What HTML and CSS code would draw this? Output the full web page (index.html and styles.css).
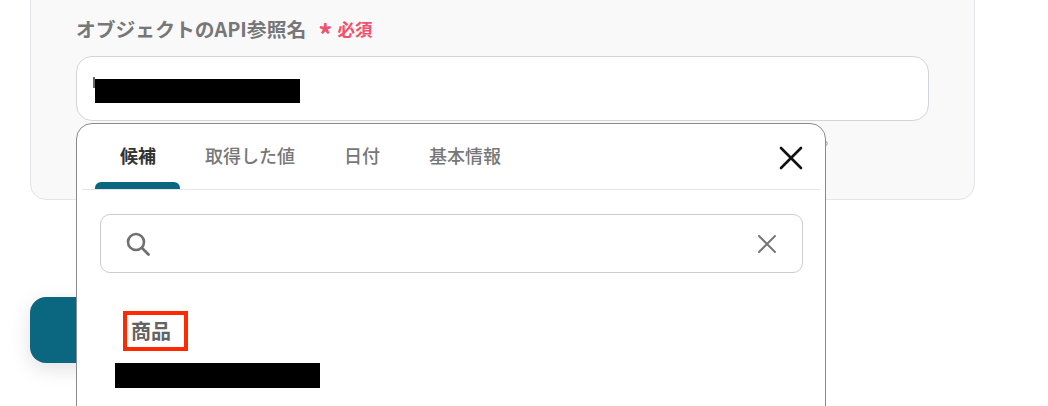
FILE: index.html
```html
<!DOCTYPE html>
<html lang="ja">
<head>
<meta charset="utf-8">
<link rel="stylesheet" href="styles.css">
</head>
<body>
<div class="page">
  <section class="card">
    <div class="label">オブジェクトのAPI参照名<span class="req"><span class="ast">*</span>必須</span></div>
    <div class="input"><span class="caret"></span><span class="redact redact-input"></span></div>
    <div class="help">オブジェクトのAPI参照名を入力してください。</div>
  </section>
  <button class="primary" type="button" aria-label="テスト"></button>

  <div class="dropdown">
    <div class="tabs">
      <div class="tab active">候補</div>
      <div class="tab">取得した値</div>
      <div class="tab">日付</div>
      <div class="tab">基本情報</div>
      <button class="close" type="button" aria-label="閉じる">
        <svg width="24" height="24" viewBox="0 0 24 24"><path d="M2 2 L22 22 M22 2 L2 22" stroke="#111" stroke-width="2.6" stroke-linecap="round" fill="none"/></svg>
      </button>
    </div>
    <div class="body">
      <div class="search">
        <svg class="s-icon" width="24" height="24" viewBox="0 0 24 24"><circle cx="10" cy="10" r="8" stroke="#707070" stroke-width="2.6" fill="none"/><path d="M16 16 L22.5 22.5" stroke="#707070" stroke-width="2.8" stroke-linecap="round"/></svg>
        <svg class="s-clear" width="18" height="18" viewBox="0 0 18 18"><path d="M1 1 L17 17 M17 1 L1 17" stroke="#777" stroke-width="2" stroke-linecap="round" fill="none"/></svg>
      </div>
      <div class="item">
        <span class="item-title">商品</span>
        <div class="item-sub"><span class="redact redact-sub"></span></div>
      </div>
    </div>
  </div>
</div>
</body>
</html>
```

FILE: styles.css
```css
* { box-sizing: border-box; }
html, body { margin: 0; padding: 0; background: #fff; }
body {
  font-family: "Noto Sans CJK JP", "Noto Sans", sans-serif;
  width: 1048px;
  height: 406px;
  overflow: hidden;
  position: relative;
}
.page {
  padding: 0 0 0 30px;
  display: flex;
  flex-direction: column;
  align-items: flex-start;
}
.card {
  margin-top: -30px;
  width: 945px;
  height: 230px;
  background: #f9f9fa;
  border: 1px solid #e3e4e8;
  border-radius: 16px;
  padding: 44px 45px 0 45px;
  display: flex;
  flex-direction: column;
}
.label {
  font-size: 19.8px;
  font-weight: 700;
  color: #777;
  line-height: 28px;
  display: flex;
  align-items: center;
}
.req {
  color: #f2506c;
  font-size: 17.5px;
  margin-left: 12px;
  display: flex;
  align-items: center;
}
.ast {
  font-size: 28px;
  line-height: 20px;
  margin-right: 5px;
  position: relative;
  top: 5px;
}
.input {
  margin-top: 13px;
  width: 853px;
  height: 65px;
  background: #fff;
  border: 1px solid #d3d5dc;
  border-radius: 16px;
  display: flex;
  align-items: center;
  padding-left: 16px;
}
.caret {
  width: 2px;
  height: 11px;
  background: #666;
  margin-top: -12px;
}
.redact { display: block; background: #000; }
.redact-input { width: 205px; height: 24px; margin-top: 5px; }
.help {
  margin-top: 8px;
  font-size: 13px;
  color: #888;
  width: 760px;
  text-align: right;
  line-height: 20px;
}
.primary {
  margin-top: 97px;
  width: 220px;
  height: 66px;
  border: none;
  border-radius: 16px;
  background: #0b6680;
  box-shadow: 0 6px 20px rgba(0,0,0,0.12);
}
.dropdown {
  position: absolute;
  left: 76px;
  top: 123px;
  width: 750px;
  height: 320px;
  background: #fff;
  border: 1px solid #8a8a8a;
  border-radius: 16px;
}
.tabs {
  height: 66px;
  display: flex;
  align-items: stretch;
  margin: 0 5px 0 5px;
  border-bottom: 1px solid #e5e5e5;
  position: relative;
  padding-left: 13px;
}
.tab {
  padding: 0 24px 0 25px;
  font-size: 18px;
  color: #777;
  font-weight: 500;
  display: flex;
  align-items: center;
  position: relative;
  padding-bottom: 4px;
}
.tab.active {
  color: #333;
  font-weight: 700;
}
.tab.active::after {
  content: "";
  position: absolute;
  left: 0;
  right: 0;
  bottom: 0;
  height: 7px;
  background: #0b6680;
  border-radius: 6px 6px 0 0;
}
.close {
  margin-left: auto;
  margin-right: 17px;
  background: none;
  border: none;
  padding: 0;
  display: flex;
  align-items: center;
  margin-top: 2px;
}
.body {
  padding: 24px 22px 0 23px;
}
.search {
  height: 59px;
  border: 1px solid #cccccc;
  border-radius: 10px;
  display: flex;
  align-items: center;
  padding: 0 26px 0 25px;
  justify-content: space-between;
}
.item {
  padding: 38px 0 0 23px;
}
.item-title {
  display: inline-block;
  border: 4px solid #ff2a00;
  font-size: 20px;
  font-weight: 700;
  color: #636363;
  line-height: 26px;
  padding: 3px 13px 3px 4px;
}
.item-sub {
  margin-top: 12px;
  margin-left: -8px;
}
.redact-sub { width: 205px; height: 25px; }
```
